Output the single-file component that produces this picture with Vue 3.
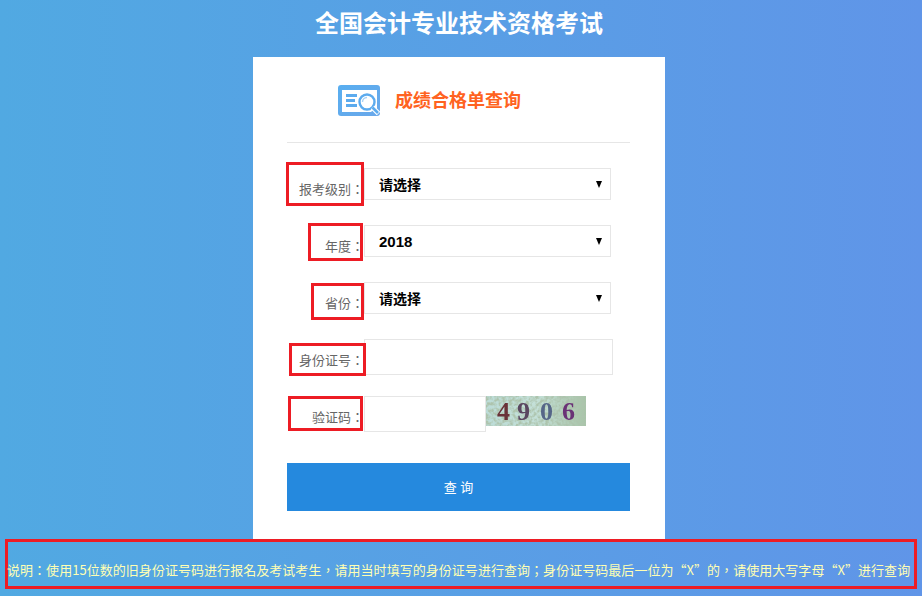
<script setup>
import { ref } from 'vue';

const level = ref('');
const year = ref('2018');
const province = ref('');
const idNumber = ref('');
const code = ref('');

const years = ['2018', '2017', '2016'];
const captchaDigits = [
  { ch: '4', x: 11, fill: '#6a3238' },
  { ch: '9', x: 31, fill: '#5a4660' },
  { ch: '0', x: 54, fill: '#566688' },
  { ch: '6', x: 76, fill: '#6a3276' }
];
</script>

<template>
  <div class="page">
    <div class="wrap">
      <h1 class="title">全国会计专业技术资格考试</h1>
      <div class="card">
        <div class="head">
          <svg class="head-icon" width="44" height="33" viewBox="0 0 44 33">
            <defs>
              <linearGradient id="iconBlue" x1="0" y1="0" x2="1" y2="1">
                <stop offset="0" stop-color="#58aef0" />
                <stop offset="1" stop-color="#6aa8ea" />
              </linearGradient>
            </defs>
            <rect x="1" y="1" width="42" height="31" rx="3" fill="url(#iconBlue)" />
            <path d="M5 6 H40 V25 H37 L34 28 H5 Z" fill="#fff" />
            <rect x="9" y="10" width="11" height="3" fill="#5cabee" />
            <rect x="9" y="15" width="9" height="3" fill="#5cabee" />
            <rect x="9" y="20" width="11" height="3" fill="#5cabee" />
            <circle cx="30" cy="18" r="7.5" fill="#fff" stroke="#5cabee" stroke-width="2.4" />
            <path d="M35.5 23.5 L41.5 29.5" stroke="#fff" stroke-width="5" fill="none" />
            <path d="M35.5 23.5 L41 29" stroke="#5cabee" stroke-width="2.6" fill="none" />
            <path d="M25.5 18 a4.5 4.5 0 0 1 4.5 -4.5" stroke="#a9d2f5" stroke-width="1.4" fill="none" />
          </svg>
          <span class="head-text">成绩合格单查询</span>
        </div>

        <form class="form" @submit.prevent>
          <div class="row row-select">
            <label class="label">报考级别：<i class="mark mark-level"></i></label>
            <div class="select-wrap">
              <select v-model="level" class="field select">
                <option value="">请选择</option>
                <option value="1">初级资格</option>
                <option value="2">中级资格</option>
              </select>
            </div>
          </div>
          <div class="row row-select">
            <label class="label">年度：<i class="mark mark-year"></i></label>
            <div class="select-wrap">
              <select v-model="year" class="field select select-year">
                <option v-for="y in years" :key="y" :value="y">{{ y }}</option>
              </select>
            </div>
          </div>
          <div class="row row-select">
            <label class="label">省份：<i class="mark mark-province"></i></label>
            <div class="select-wrap">
              <select v-model="province" class="field select">
                <option value="">请选择</option>
                <option value="bj">北京</option>
              </select>
            </div>
          </div>
          <div class="row row-id">
            <label class="label">身份证号：<i class="mark mark-id"></i></label>
            <input v-model="idNumber" class="field input" type="text" />
          </div>
          <div class="row row-code">
            <label class="label">验证码：<i class="mark mark-code"></i></label>
            <input v-model="code" class="field input-code" type="text" />
            <svg class="captcha" width="100" height="30" viewBox="0 0 100 30">
              <defs>
                <linearGradient id="capBg" x1="0" y1="0" x2="1" y2="0">
                  <stop offset="0" stop-color="#bcdcd8" />
                  <stop offset="0.5" stop-color="#c4e0d8" />
                  <stop offset="1" stop-color="#a8c4a8" />
                </linearGradient>
                <filter id="capNoise" x="0" y="0" width="100%" height="100%">
                  <feTurbulence type="fractalNoise" baseFrequency="0.3" numOctaves="2" seed="6" />
                  <feColorMatrix values="0 0 0 0 0.42  0 0 0 0 0.55  0 0 0 0 0.42  0 0 0 3 -1.1" />
                </filter>
                <filter id="capBlur">
                  <feGaussianBlur stdDeviation="0.5" />
                </filter>
              </defs>
              <rect width="100" height="30" fill="url(#capBg)" />
              <rect width="100" height="30" filter="url(#capNoise)" />
              <text
                v-for="d in captchaDigits"
                :key="d.ch"
                class="captcha-digit"
                :x="d.x"
                y="24"
                :fill="d.fill"
                filter="url(#capBlur)"
              >{{ d.ch }}</text>
            </svg>
          </div>
          <button class="submit" type="submit">查 询</button>
        </form>
      </div>
    </div>
    <div class="note">说明：使用15位数的旧身份证号码进行报名及考试考生，请用当时填写的身份证号进行查询；身份证号码最后一位为“X”的，请使用大写字母“X”进行查询</div>
  </div>
</template>

<style>
html, body {
  margin: 0;
  padding: 0;
}
</style>

<style scoped>
.page {
  height: 596px;
  overflow: hidden;
  box-sizing: border-box;
  background: linear-gradient(to right, #51a9e2, #6095e8);
  font-family: "Liberation Sans", "Noto Sans CJK SC", sans-serif;
}
.wrap {
  width: 918px;
}
.title {
  margin: 0;
  height: 57px;
  line-height: 48px;
  text-align: center;
  color: #fff;
  font-size: 24px;
  font-weight: bold;
}
.card {
  width: 412px;
  height: 482px;
  margin: 0 auto;
  padding: 0 35px 0 34px;
  box-sizing: border-box;
  background: #fff;
}
.head {
  display: flex;
  align-items: center;
  height: 85px;
  padding-left: 50px;
  border-bottom: 1px solid #e6e6e6;
}
.head-icon {
  margin: 2px 14px 0 0;
}
.head-text {
  margin-top: -2px;
  font-size: 18px;
  font-weight: bold;
  color: #ff6321;
}
.form {
  padding-top: 25px;
}
.row {
  display: flex;
  align-items: flex-start;
}
.row-select {
  height: 57px;
}
.row-id {
  height: 57px;
}
.row-code {
  height: 67px;
}
.label {
  position: relative;
  width: 77px;
  flex: none;
  box-sizing: border-box;
  padding-top: 13px;
  text-align: right;
  font-family: "Noto Sans CJK TC", sans-serif;
  font-size: 13px;
  line-height: 16px;
  color: #666;
}
.mark {
  position: absolute;
  box-sizing: border-box;
  border: 3px solid #ed1c24;
}
.mark-level {
  left: -1px;
  top: -6px;
  width: 78px;
  height: 44px;
}
.mark-year {
  left: 21px;
  top: -2px;
  width: 55px;
  height: 38px;
}
.mark-province {
  left: 24px;
  top: 1px;
  width: 53px;
  height: 37px;
}
.mark-id {
  left: 2px;
  top: 4px;
  width: 77px;
  height: 33px;
}
.mark-code {
  left: 1px;
  top: 0;
  width: 75px;
  height: 35px;
}
.field {
  box-sizing: border-box;
  border: 1px solid #e6e6e6;
  border-radius: 0;
  background: #fff;
  outline: none;
  font-family: "Liberation Sans", "Noto Sans CJK SC", sans-serif;
}
.select-wrap {
  position: relative;
  width: 247px;
  height: 32px;
}
.select-wrap::after {
  content: "";
  position: absolute;
  right: 9px;
  top: 13px;
  border-style: solid;
  border-width: 7px 3.5px 0;
  border-color: #000 transparent transparent;
  pointer-events: none;
}
.select {
  display: block;
  width: 247px;
  height: 32px;
  padding: 2px 0 0 14px;
  appearance: none;
  font-size: 14px;
  font-weight: bold;
  color: #000;
}
.select-year {
  padding-top: 0;
  font-size: 15px;
}
.input {
  width: 249px;
  height: 36px;
}
.input-code {
  width: 122px;
  height: 36px;
}
.captcha {
  flex: none;
}
.captcha-digit {
  font-family: "Liberation Serif", serif;
  font-size: 26px;
  font-weight: bold;
}
.submit {
  display: block;
  width: 343px;
  height: 48px;
  padding: 0 0 2px;
  border: none;
  background: #2589de;
  color: #fff;
  font-family: inherit;
  font-size: 13px;
}
.note {
  box-sizing: border-box;
  width: 912px;
  height: 50px;
  margin-left: 5px;
  border: 3px solid #ed1c24;
  padding-top: 19px;
  text-indent: -1px;
  font-family: "Noto Sans CJK TC", sans-serif;
  font-size: 13px;
  letter-spacing: 0.04px;
  line-height: 18px;
  color: #ffffb3;
  white-space: nowrap;
}
</style>
